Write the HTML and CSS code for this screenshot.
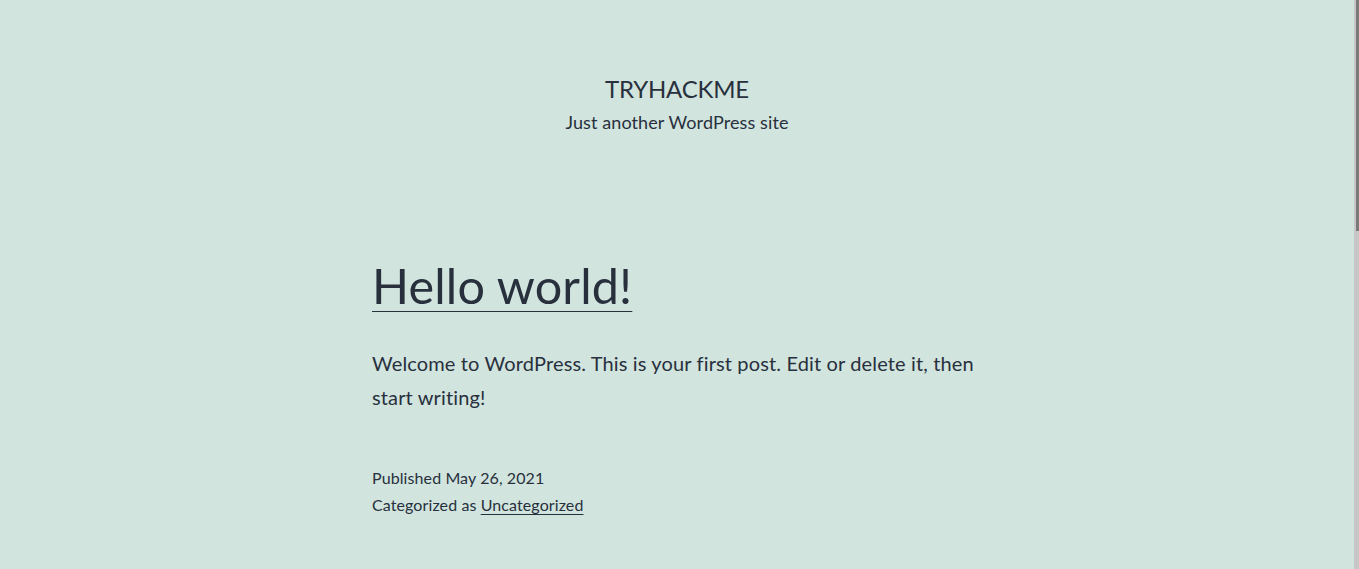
FILE: index.html
```html
<!DOCTYPE html>
<html lang="en">
<head>
<meta charset="utf-8">
<title>TRYHACKME – Just another WordPress site</title>
<link rel="stylesheet" href="styles.css">
</head>
<body>
<div class="site">
  <header class="site-header">
    <p class="site-title"><a href="#">TRYHACKME</a></p>
    <p class="site-description">Just another WordPress site</p>
  </header>
  <main class="site-main">
    <article class="post">
      <h2 class="entry-title"><a href="#">Hello world!</a></h2>
      <div class="entry-content">
        <p>Welcome to WordPress. This is your first post. Edit or delete it, then start writing!</p>
      </div>
      <footer class="entry-footer">
        <div class="posted-on">Published <time>May 26, 2021</time></div>
        <div class="cat-links">Categorized as <a href="#">Uncategorized</a></div>
      </footer>
    </article>
  </main>
</div>
<div class="scrollbar" aria-hidden="true"><div class="scrollbar-thumb"></div></div>
</body>
</html>
```
FILE: styles.css
```css
html {
  background: #d1e4dd;
}
body {
  margin: 0;
  min-height: 100vh;
  display: flex;
  align-items: stretch;
  background: #d1e4dd;
  color: #28303d;
  font-family: "Lato", "Liberation Sans", sans-serif;
}
.site {
  flex: 1;
  padding-bottom: 30px;
}
.scrollbar {
  width: 5px;
  flex: none;
  background: #c6c6c6;
  display: flex;
  justify-content: flex-end;
  align-items: flex-start;
}
.scrollbar-thumb {
  width: 3px;
  height: 231px;
  background: #7a7a7a;
}
a {
  color: #28303d;
}
.site-header {
  padding-top: 74px;
  text-align: center;
}
.site-title {
  margin: 0;
  font-size: 24px;
  line-height: 30px;
  text-transform: uppercase;
  letter-spacing: -0.2px;
}
.site-title a {
  text-decoration: none;
}
.site-description {
  margin: 6px 0 0;
  font-size: 18px;
  line-height: 24px;
  letter-spacing: 0.1px;
}
.site-main {
  width: 610px;
  margin: 0 auto;
  padding-top: 122px;
}
.entry-title {
  margin: 0;
  font-size: 48.5px;
  line-height: 58px;
  font-weight: normal;
  letter-spacing: 0.17px;
}
.entry-title a {
  text-decoration: underline;
  text-decoration-thickness: 1px;
  text-underline-offset: 7px;
}
.entry-content p {
  margin: 32px 0 0;
  font-size: 20px;
  line-height: 34px;
  letter-spacing: 0.14px;
}
.entry-footer {
  margin-top: 50px;
  font-size: 16px;
  line-height: 27.2px;
  letter-spacing: 0.1px;
}
.cat-links a {
  text-decoration: underline;
  text-decoration-thickness: 1px;
  text-underline-offset: 3px;
}
```
